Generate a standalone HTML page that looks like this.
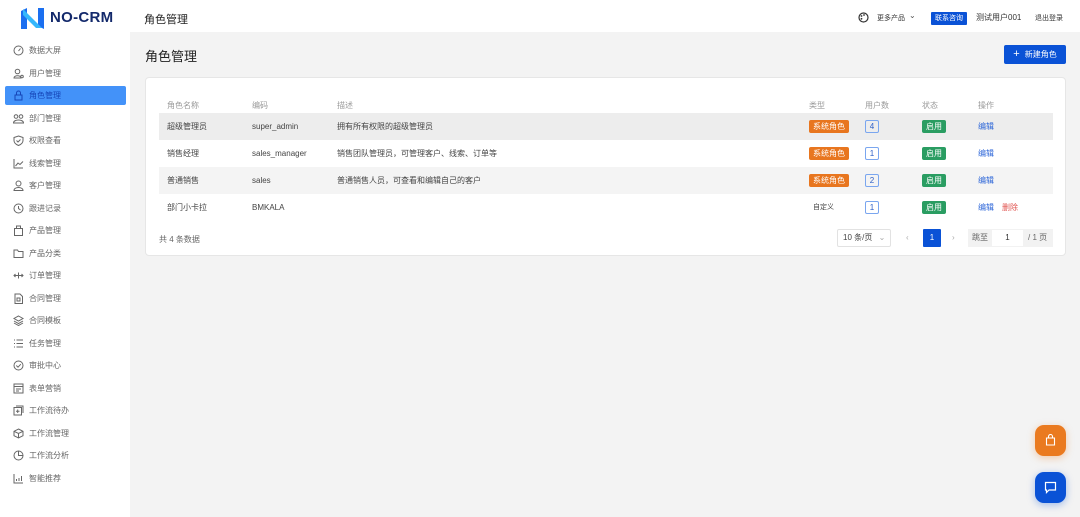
<!DOCTYPE html>
<html><head><meta charset="utf-8"><style>
*{box-sizing:border-box;margin:0;padding:0}
body{width:1080px;height:517px;overflow:hidden;background:#f3f3f3;font-family:"Liberation Sans","Noto Sans CJK SC",sans-serif;font-size:8px;color:#444;position:relative}
.a{position:absolute;white-space:nowrap}
#hdr{position:absolute;left:0;top:0;width:1080px;height:32px;background:#fff}
#side{position:absolute;left:0;top:32px;width:130px;height:485px;background:#fff}
.it{position:absolute;left:5px;width:121px;height:19px;line-height:19px;padding-left:24px;color:#666;font-size:8px}
.it svg{position:absolute;left:8px;top:4px;width:11px;height:11px;fill:none;stroke:#666;stroke-width:1}
.it.on{background:#4392f9;color:#1645b8;border-radius:2px}
.it.on svg{stroke:#1645b8}
#card{position:absolute;left:145px;top:77px;width:921px;height:179px;background:#fff;border:1px solid #e6e6e6;border-radius:4px}
.row{position:absolute;left:13px;width:894px;height:27px;line-height:27px}
.row span{position:absolute;font-size:8px}
.tag{display:inline-block;height:13px;line-height:13px;padding:0 4px;border-radius:2px;color:#fff;font-size:7px;top:7px}
.or{background:#e8761f}
.gr{background:#2a9d62}
.num{display:inline-block;width:14px;height:13px;line-height:11px;text-align:center;border:1px solid #7aa6ef;border-radius:2px;color:#2d5fc7;top:7px;font-size:8px}
.lk{color:#2d66d8}
</style></head><body>
<div id="hdr">
<svg class="a" style="left:21px;top:8px" width="23" height="21" viewBox="0 0 23 21"><path d="M0 3 L6 0 V21 H0Z" fill="#1b6ff0"/><path d="M17 0 H23 V21 L17 18Z" fill="#1b6ff0"/><path d="M2 1 L21 20 L15 20 L2 7Z" fill="#35b7fb"/></svg>
<div class="a" style="left:50px;top:9px;font-size:15px;font-weight:bold;color:#13296b;letter-spacing:.3px">NO-CRM</div>
<div class="a" style="left:144px;top:11px;font-size:11px;color:#222">角色管理</div>
<svg class="a" style="left:858px;top:12px" width="11" height="11" viewBox="0 0 11 11"><circle cx="5.5" cy="5.5" r="4.5" fill="none" stroke="#333" stroke-width="1.2"/><circle cx="3.5" cy="4" r=".9" fill="#333"/><circle cx="6" cy="3" r=".9" fill="#333"/><circle cx="3.5" cy="6.8" r=".9" fill="#333"/></svg>
<div class="a" style="left:877px;top:13px;font-size:7px;color:#333">更多产品</div>
<div class="a" style="left:909px;top:11px;font-size:8px;color:#555">⌄</div>
<div class="a" style="left:931px;top:12px;width:36px;height:13px;background:#0a52d6;color:#fff;font-size:7px;line-height:13px;text-align:center;border-radius:1px">联系咨询</div>
<div class="a" style="left:976px;top:12px;font-size:8px;color:#333">测试用户001</div>
<div class="a" style="left:1035px;top:13px;font-size:7px;color:#333">退出登录</div>
</div>
<div id="side">
<div class="it" style="top:9px"><svg viewBox="0 0 11 11"><circle cx="5.5" cy="5.5" r="4.5"/><path d="M5.5 6 L7.5 3.5"/></svg>数据大屏</div>
<div class="it" style="top:32px"><svg viewBox="0 0 11 11"><circle cx="4.5" cy="3.5" r="2.3"/><path d="M1 10 C1 7 8 7 8 10Z"/><circle cx="9" cy="8.5" r="1.3"/></svg>用户管理</div>
<div class="it on" style="top:54px"><svg viewBox="0 0 11 11"><rect x="2" y="5" width="7" height="5"/><path d="M3.5 5 V3 a2 2 0 0 1 4 0 V5"/></svg>角色管理</div>
<div class="it" style="top:77px"><svg viewBox="0 0 11 11"><circle cx="3" cy="3.5" r="1.8"/><circle cx="8" cy="3.5" r="1.8"/><path d="M0.5 10 C0.5 6 10.5 6 10.5 10Z"/></svg>部门管理</div>
<div class="it" style="top:99px"><svg viewBox="0 0 11 11"><path d="M5.5 1 L10 2.5 V5.5 C10 8 8 9.5 5.5 10.5 C3 9.5 1 8 1 5.5 V2.5Z"/><path d="M3.5 5.5 L5 7 L7.5 4.5"/></svg>权限查看</div>
<div class="it" style="top:122px"><svg viewBox="0 0 11 11"><path d="M1 1 V10 H10"/><path d="M2.5 8 L5 5 L7 6.5 L10 3.5"/></svg>线索管理</div>
<div class="it" style="top:144px"><svg viewBox="0 0 11 11"><circle cx="5.5" cy="3.5" r="2.5"/><path d="M1 10.5 C1 6.5 10 6.5 10 10.5Z"/></svg>客户管理</div>
<div class="it" style="top:167px"><svg viewBox="0 0 11 11"><circle cx="5.5" cy="5.5" r="4.5"/><path d="M5.5 3 V5.5 L7.5 7"/></svg>跟进记录</div>
<div class="it" style="top:189px"><svg viewBox="0 0 11 11"><rect x="1.5" y="3.5" width="8" height="7"/><path d="M3.5 3.5 V1 H7.5 V3.5"/></svg>产品管理</div>
<div class="it" style="top:212px"><svg viewBox="0 0 11 11"><path d="M1 2 H4.5 L5.5 3.5 H10 V9.5 H1Z"/></svg>产品分类</div>
<div class="it" style="top:234px"><svg viewBox="0 0 11 11"><path d="M1 5.5 H10 M5.5 2.5 V8.5 M2.5 4 L1 5.5 L2.5 7 M8.5 4 L10 5.5 L8.5 7"/></svg>订单管理</div>
<div class="it" style="top:257px"><svg viewBox="0 0 11 11"><path d="M2 1 H7 L9.5 3.5 V10.5 H2Z"/><rect x="4" y="5" width="3" height="3"/></svg>合同管理</div>
<div class="it" style="top:279px"><svg viewBox="0 0 11 11"><path d="M5.5 1 L10 3.5 L5.5 6 L1 3.5Z M1 6 L5.5 8.5 L10 6 M1 8 L5.5 10.5 L10 8"/></svg>合同模板</div>
<div class="it" style="top:302px"><svg viewBox="0 0 11 11"><path d="M3.5 2 H10 M3.5 5.5 H10 M3.5 9 H10 M1 2 H2 M1 5.5 H2 M1 9 H2"/></svg>任务管理</div>
<div class="it" style="top:324px"><svg viewBox="0 0 11 11"><circle cx="5.5" cy="5.5" r="4.5"/><path d="M3.3 5.5 L5 7.2 L7.8 4.2"/></svg>审批中心</div>
<div class="it" style="top:347px"><svg viewBox="0 0 11 11"><rect x="1" y="1" width="9" height="9"/><path d="M1 3.5 H10 M3 6 H8 M3 8 H6"/></svg>表单营销</div>
<div class="it" style="top:369px"><svg viewBox="0 0 11 11"><rect x="1" y="2.5" width="7.5" height="7.5"/><path d="M3 1 H10 V8 M4.7 4.5 V8 M3 6.2 H6.5"/></svg>工作流待办</div>
<div class="it" style="top:392px"><svg viewBox="0 0 11 11"><path d="M5.5 1 L10 3.3 V7.7 L5.5 10 L1 7.7 V3.3Z M1 3.3 L5.5 5.5 L10 3.3 M5.5 5.5 V10"/></svg>工作流管理</div>
<div class="it" style="top:414px"><svg viewBox="0 0 11 11"><circle cx="5.5" cy="5.5" r="4.5"/><path d="M5.5 1 V5.5 H10"/></svg>工作流分析</div>
<div class="it" style="top:437px"><svg viewBox="0 0 11 11"><path d="M1 1 V10 H10 M3.5 8 V6 M6 8 V5 M8.5 8 V3"/></svg>智能推荐</div>
</div>
<div class="a" style="left:145px;top:46px;font-size:13px;color:#222">角色管理</div>
<div class="a" style="left:1004px;top:45px;width:62px;height:19px;background:#0a52d6;color:#fff;font-size:8px;line-height:19px;text-align:center;border-radius:2px"><span style="font-size:11px;margin-right:5px">+</span>新建角色</div>
<div id="card">
<div class="row" style="top:14px;color:#999"><span style="left:8px">角色名称</span><span style="left:93px">编码</span><span style="left:178px">描述</span><span style="left:650px">类型</span><span style="left:706px">用户数</span><span style="left:763px">状态</span><span style="left:819px">操作</span></div>
<div class="row" style="top:35px;background:#ededed"><span style="left:8px">超级管理员</span><span style="left:93px">super_admin</span><span style="left:178px">拥有所有权限的超级管理员</span><span class="tag or" style="left:650px">系统角色</span><span class="num" style="left:706px">4</span><span class="tag gr" style="left:763px">启用</span><span class="lk" style="left:819px">编辑</span></div>
<div class="row" style="top:62px"><span style="left:8px">销售经理</span><span style="left:93px">sales_manager</span><span style="left:178px">销售团队管理员，可管理客户、线索、订单等</span><span class="tag or" style="left:650px">系统角色</span><span class="num" style="left:706px">1</span><span class="tag gr" style="left:763px">启用</span><span class="lk" style="left:819px">编辑</span></div>
<div class="row" style="top:89px;background:#f4f4f4"><span style="left:8px">普通销售</span><span style="left:93px">sales</span><span style="left:178px">普通销售人员，可查看和编辑自己的客户</span><span class="tag or" style="left:650px">系统角色</span><span class="num" style="left:706px">2</span><span class="tag gr" style="left:763px">启用</span><span class="lk" style="left:819px">编辑</span></div>
<div class="row" style="top:116px"><span style="left:8px">部门小卡拉</span><span style="left:93px">BMKALA</span><span style="left:654px;font-size:7px">自定义</span><span class="num" style="left:706px">1</span><span class="tag gr" style="left:763px">启用</span><span class="lk" style="left:819px">编辑</span><span style="left:843px;color:#e0534f">删除</span></div>
<div class="a" style="left:13px;top:156px;color:#666">共 4 条数据</div>
<div class="a" style="left:691px;top:151px;width:54px;height:18px;border:1px solid #e2e2e2;border-radius:2px;line-height:16px;padding-left:5px;color:#444">10 条/页 <span style="color:#aaa;margin-left:4px">⌄</span></div>
<div class="a" style="left:760px;top:155px;color:#aaa">‹</div>
<div class="a" style="left:777px;top:151px;width:18px;height:18px;background:#0a52d6;color:#fff;text-align:center;line-height:18px;border-radius:1px">1</div>
<div class="a" style="left:806px;top:155px;color:#aaa">›</div>
<div class="a" style="left:822px;top:151px;width:85px;height:18px;background:#f2f2f2;line-height:18px;color:#666"><span style="margin-left:4px">跳至</span><span style="position:absolute;left:24px;top:1px;width:31px;height:16px;background:#fff;text-align:center;line-height:16px;color:#333">1</span><span style="position:absolute;left:60px">/ 1 页</span></div>
</div>
<div class="a" style="left:1035px;top:425px;width:31px;height:31px;background:#ea7a1f;border-radius:9px;box-shadow:0 2px 8px rgba(234,122,31,.35)"><svg style="position:absolute;left:10px;top:9px" width="11" height="12" viewBox="0 0 11 12"><path d="M1.5 4 H9.5 V11 H1.5Z M3.5 4 V2.5 a2 2 0 0 1 4 0 V4" fill="none" stroke="#fff" stroke-width="1.1"/></svg></div>
<div class="a" style="left:1035px;top:472px;width:31px;height:31px;background:#0a52d6;border-radius:9px;box-shadow:0 2px 8px rgba(10,82,214,.35)"><svg style="position:absolute;left:9px;top:9px" width="13" height="13" viewBox="0 0 13 13"><path d="M1.5 1.5 H11.5 V9 H5 L2.5 11.5 V9 H1.5Z" fill="none" stroke="#fff" stroke-width="1.2"/></svg></div>
</body></html>
